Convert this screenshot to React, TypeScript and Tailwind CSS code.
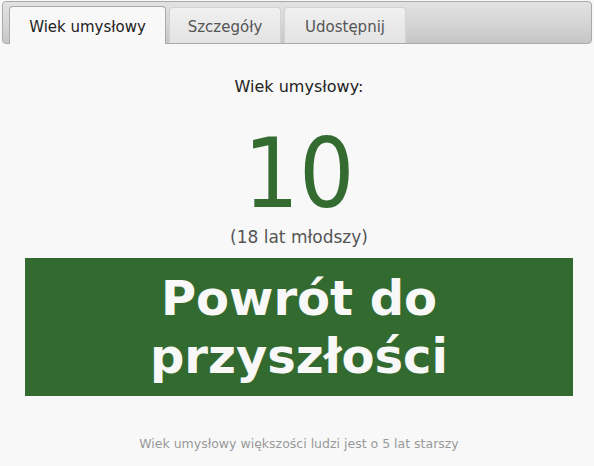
export default function App() {
  const font = { fontFamily: '"DejaVu Sans", Verdana, sans-serif' };
  return (
    <div className="w-[594px] h-[466px] bg-[#f8f8f8] overflow-hidden" style={font}>
      {/* pasek zakładek */}
      <div className="mx-[2px] mt-[1px] h-[43px] rounded-t-[4px] rounded-b-[4px] border border-[#aaaaaa] bg-gradient-to-b from-[#e2e2e2] via-[#d6d6d6] to-[#c6c6c6] flex items-end pl-[6px] gap-[3px]">
        <div className="w-[157px] h-[38px] -mb-px pt-[3px] rounded-t-[4px] border border-b-0 border-[#aaaaaa] bg-[#f8f8f8] flex items-center justify-center text-[15px] text-[#222]">
          Wiek umysłowy
        </div>
        <div className="w-[112px] h-[36px] pt-[3px] rounded-t-[4px] border border-b-0 border-[#d3d3d3] bg-gradient-to-b from-[#f0f0f0] to-[#e3e3e3] flex items-center justify-center text-[15px] text-[#555]">
          Szczegóły
        </div>
        <div className="w-[122px] h-[36px] pt-[3px] rounded-t-[4px] border border-b-0 border-[#d3d3d3] bg-gradient-to-b from-[#f0f0f0] to-[#e3e3e3] flex items-center justify-center text-[15px] text-[#555]">
          Udostępnij
        </div>
      </div>

      <div className="flex flex-col items-center pl-[4px]">
        <div className="mt-[31px] text-[16px] text-[#222] leading-[24px]">Wiek umysłowy:</div>
        <div
          className="mt-[27px] text-[97px] leading-[96px] text-[#336b30]"
          style={{ fontFamily: '"DejaVu Sans Condensed", "Liberation Sans", sans-serif' }}
        >
          10
        </div>
        <div className="mt-[4px] text-[17px] leading-[22px] text-[#555]">(18 lat młodszy)</div>
        <div className="mt-[10px] w-[548px] h-[138px] bg-[#336a30] flex items-center justify-center text-center text-[#f8f8f8] font-bold text-[48px] leading-[58px]">
          Powrót do
          <br />
          przyszłości
        </div>
        <div className="mt-[39px] text-[12.5px] text-[#999]">Wiek umysłowy większości ludzi jest o 5 lat starszy</div>
      </div>
    </div>
  );
}
